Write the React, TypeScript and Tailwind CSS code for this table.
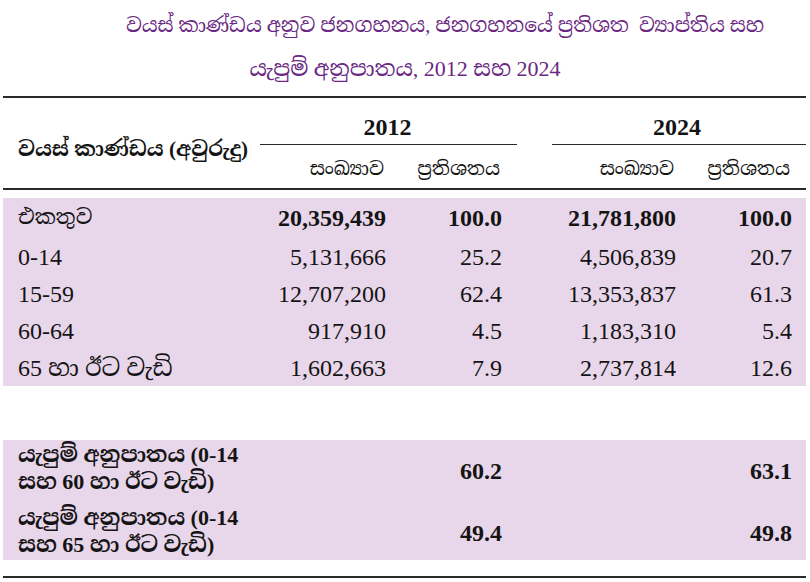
import React from "react";

const SERIF = "font-['Liberation_Serif','Noto_Serif_Sinhala','Noto_Sans_Sinhala','Iskoola_Pota','Lohit_Sinhala',serif]";

type Row = { label: string; c1: string; p1: string; c2: string; p2: string; bold?: boolean; h: string };

const rows: Row[] = [
  { label: "එකතුව", c1: "20,359,439", p1: "100.0", c2: "21,781,800", p2: "100.0", bold: true, h: "h-[40px]" },
  { label: "0-14", c1: "5,131,666", p1: "25.2", c2: "4,506,839", p2: "20.7", h: "h-[37px]" },
  { label: "15-59", c1: "12,707,200", p1: "62.4", c2: "13,353,837", p2: "61.3", h: "h-[37px]" },
  { label: "60-64", c1: "917,910", p1: "4.5", c2: "1,183,310", p2: "5.4", h: "h-[37px]" },
  { label: "65 හා ඊට වැඩි", c1: "1,602,663", p1: "7.9", c2: "2,737,814", p2: "12.6", h: "h-[37px]" },
];

const GRID = "grid grid-cols-[259px_124px_116px_174px_116px_1fr]";

export default function App() {
  return (
    <div className={`w-[810px] h-[582px] bg-white text-[#141414] ${SERIF} overflow-hidden`}>
      {/* Title */}
      <div className="h-[96px] flex flex-col text-[#6a2883]">
        <div className="h-[50px] flex items-center justify-center pl-[80px] text-[20px]">
          වයස් කාණ්ඩය අනුව ජනගහනය, ජනගහනයේ ප්‍රතිශත&nbsp; ව්‍යාප්තිය සහ
        </div>
        <div className="h-[36px] flex items-center justify-center text-[22px]">
          යැපුම් අනුපාතය, 2012 සහ 2024
        </div>
      </div>

      <div className="ml-[3px] w-[803px]">
        <div className="h-[2px] bg-[#2a2a2a]" />

        {/* Header */}
        <div className="h-[90px] grid grid-cols-[257px_257px_35px_1fr] grid-rows-[47px_43px]">
          <div className="row-span-2 flex items-center pl-[15px] pt-[14px] text-[21px] font-bold">
            වයස් කාණ්ඩය (අවුරුදු)
          </div>
          <div className="flex items-end">
            <div className="w-full border-b-[1.5px] border-[#2a2a2a] text-center text-[24px] font-bold leading-none pb-[5px] pr-[2px]">
              2012
            </div>
          </div>
          <div />
          <div className="flex items-end">
            <div className="w-full border-b-[1.5px] border-[#2a2a2a] text-center text-[24px] font-bold leading-none pb-[5px] pr-[4px]">
              2024
            </div>
          </div>
          <div className="col-span-3">
            <div className="grid grid-cols-[124px_116px_174px_116px] h-full text-[19px] items-center pt-[6px]">
              <div className="text-right">සංඛ්‍යාව</div>
              <div className="text-right">ප්‍රතිශතය</div>
              <div className="text-right">සංඛ්‍යාව</div>
              <div className="text-right">ප්‍රතිශතය</div>
            </div>
          </div>
        </div>

        <div className="h-[2px] bg-[#2a2a2a]" />

        {/* Body band */}
        <div className="mt-[8px] bg-[#e8d6ea] text-[24px]">
          {rows.map((r) => (
            <div key={r.label} className={`${GRID} ${r.h} items-center`}>
              <div className={`pl-[15px] ${r.bold ? "text-[21px]" : ""}`}>{r.label}</div>
              <div className={`text-right ${r.bold ? "font-bold" : ""}`}>{r.c1}</div>
              <div className={`text-right ${r.bold ? "font-bold" : ""}`}>{r.p1}</div>
              <div className={`text-right ${r.bold ? "font-bold" : ""}`}>{r.c2}</div>
              <div className={`text-right ${r.bold ? "font-bold" : ""}`}>{r.p2}</div>
              <div />
            </div>
          ))}
        </div>

        <div className="h-[54px]" />

        {/* Dependency ratios */}
        <div className="bg-[#e8d6ea] font-bold text-[22px] leading-[27px]">
          <div className={`${GRID} h-[63px]`}>
            <div className="pl-[15px] col-span-2 pt-[1px]">
              <div>යැපුම් අනුපාතය (0-14</div>
              <div>සහ 60 හා ඊට වැඩි)</div>
            </div>
            <div className="text-right text-[24px] self-center">60.2</div>
            <div />
            <div className="text-right text-[24px] self-center">63.1</div>
            <div />
          </div>
          <div className={`${GRID} h-[57px]`}>
            <div className="pl-[15px] col-span-2 pt-[1px]">
              <div>යැපුම් අනුපාතය (0-14</div>
              <div>සහ 65 හා ඊට වැඩි)</div>
            </div>
            <div className="text-right text-[24px] self-center pt-[3px]">49.4</div>
            <div />
            <div className="text-right text-[24px] self-center pt-[3px]">49.8</div>
            <div />
          </div>
        </div>

        <div className="h-[16px]" />
        <div className="h-[2px] bg-[#2a2a2a]" />
      </div>
    </div>
  );
}
